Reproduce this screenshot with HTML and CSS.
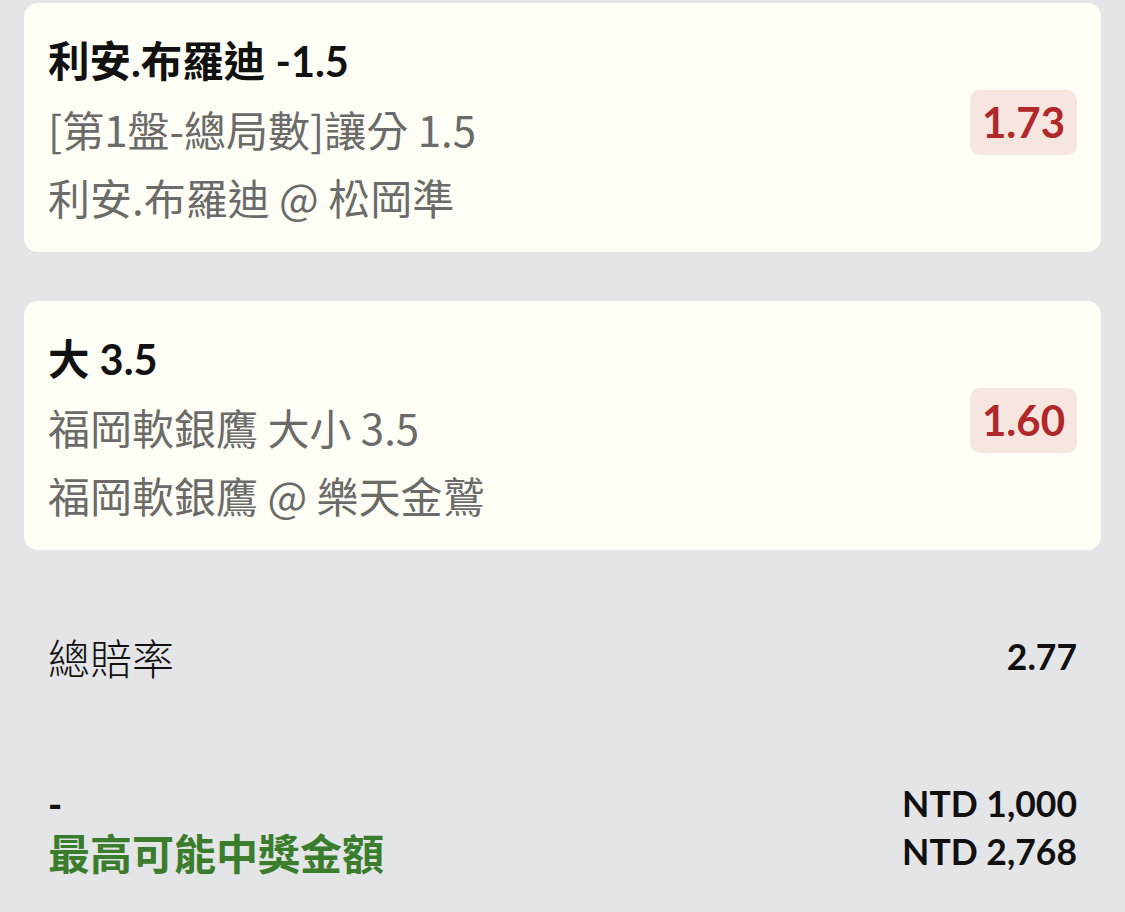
FILE: index.html
```html
<!DOCTYPE html>
<html lang="zh-Hant">
<head>
<meta charset="utf-8">
<title>Bet slip</title>
<link rel="stylesheet" href="styles.css">
</head>
<body>
<main class="slip">
  <section class="legs">
    <article class="card">
      <div class="info">
        <div class="title">利安.布羅迪 -1.5</div>
        <div class="sub">[第1盤-總局數]讓分 1.5</div>
        <div class="sub">利安.布羅迪 @ 松岡準</div>
      </div>
      <div class="odds">1.73</div>
    </article>
    <article class="card">
      <div class="info">
        <div class="title">大 3.5</div>
        <div class="sub">福岡軟銀鷹 大小 3.5</div>
        <div class="sub">福岡軟銀鷹 @ 樂天金鷲</div>
      </div>
      <div class="odds">1.60</div>
    </article>
  </section>
  <section class="summary">
    <div class="row total">
      <span class="label">總賠率</span>
      <span class="value">2.77</span>
    </div>
    <div class="stake">
      <div class="row">
        <span class="dash">-</span>
        <span class="value">NTD 1,000</span>
      </div>
      <div class="row">
        <span class="win">最高可能中獎金額</span>
        <span class="value">NTD 2,768</span>
      </div>
    </div>
  </section>
</main>
</body>
</html>
```
FILE: styles.css
```css
html, body {
  margin: 0;
  padding: 0;
  background: #e4e5e7;
}
body {
  font-family: Lato, "Noto Sans CJK TC", sans-serif;
  color: #111111;
}
.slip {
  width: 1125px;
  height: 912px;
  overflow: hidden;
}
.legs {
  display: flex;
  flex-direction: column;
  gap: 49px;
  padding: 3px 24px 0;
}
.card {
  display: flex;
  align-items: center;
  justify-content: space-between;
  padding: 24px 24px 21px;
  background: #fefef6;
  border-radius: 14px;
}
.info {
  display: flex;
  flex-direction: column;
}
.title {
  font-family: Lato, "Noto Sans CJK TC", sans-serif;
  font-weight: 700;
  font-size: 41.5px;
  line-height: 68px;
  color: #111111;
}
.sub {
  font-family: "Noto Sans CJK TC", sans-serif;
  font-weight: 400;
  font-size: 42px;
  line-height: 68px;
  color: #6b6b69;
}
.odds {
  height: 65px;
  padding: 0 12px;
  margin-bottom: 14px;
  border-radius: 10px;
  background: #f7e5df;
  color: #b0282a;
  font-family: Lato, sans-serif;
  font-weight: 700;
  font-size: 42px;
  line-height: 65px;
}
.summary {
  padding: 0 48px;
}
.row {
  display: flex;
  align-items: center;
  justify-content: space-between;
}
.total {
  margin-top: 72px;
  height: 68px;
}
.label {
  font-family: "Noto Sans CJK TC", sans-serif;
  font-size: 42px;
  font-weight: 300;
  color: #111111;
}
.value {
  font-family: Lato, sans-serif;
  font-weight: 700;
  font-size: 35.5px;
  color: #111111;
}
.stake {
  margin-top: 89px;
  display: flex;
  flex-direction: column;
}
.stake .row {
  height: 48px;
}
.dash {
  font-family: Lato, sans-serif;
  font-weight: 900;
  font-size: 38px;
}
.win {
  font-family: Lato, "Noto Sans CJK TC", sans-serif;
  font-weight: 700;
  font-size: 42px;
  color: #3a7d2c;
}
```
